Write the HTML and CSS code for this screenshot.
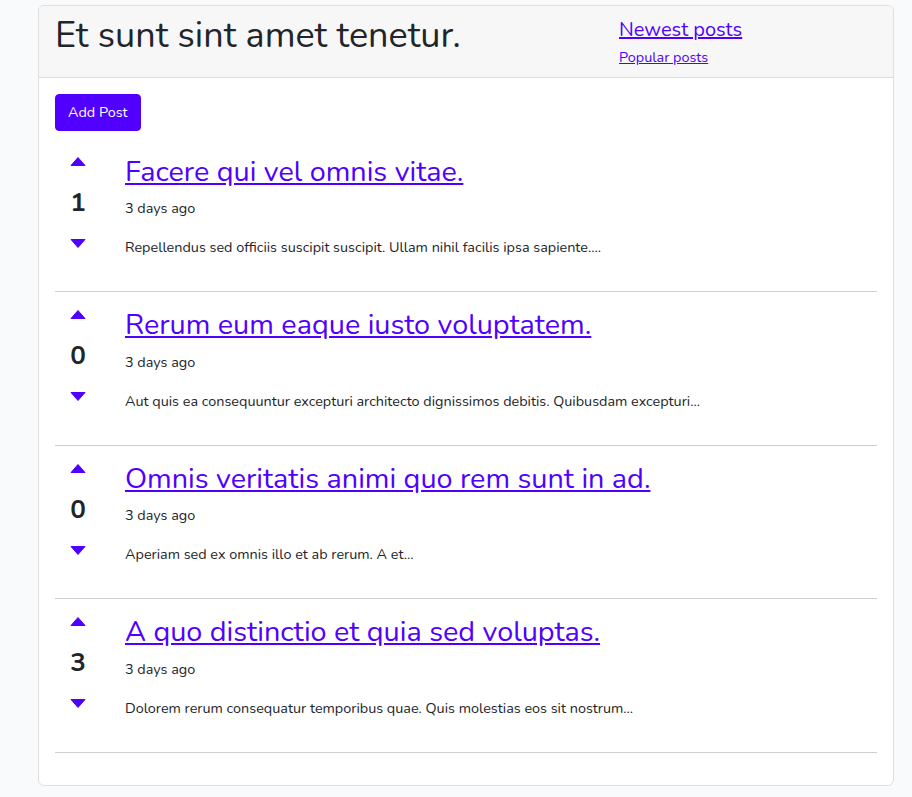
FILE: index.html
```html
<!DOCTYPE html>
<html lang="en">
<head>
<meta charset="utf-8">
<title>Posts</title>
<link rel="stylesheet" href="styles.css">
</head>
<body>
<div class="card">
  <div class="card-header">
    <h1 class="page-title">Et sunt sint amet tenetur.</h1>
    <nav class="sort-links">
      <a href="#" class="sort-main">Newest posts</a>
      <a href="#" class="sort-sub">Popular posts</a>
    </nav>
  </div>
  <div class="card-body">
    <div class="actions"><a href="#" class="btn">Add Post</a></div>
    <div class="post-list">
      <div class="post">
        <div class="vote">
          <svg class="arrow" viewBox="0 0 16 16"><path d="M1 11.5 L8 3.5 L15 11.5 Z" /></svg>
          <div class="count">1</div>
          <svg class="arrow" viewBox="0 0 16 16"><path d="M1 4.5 L8 12.5 L15 4.5 Z" /></svg>
        </div>
        <div class="post-main">
          <h2 class="post-title"><a href="#">Facere qui vel omnis vitae.</a></h2>
          <p class="post-date">3 days ago</p>
          <p class="post-body">Repellendus sed officiis suscipit suscipit. Ullam nihil facilis ipsa sapiente....</p>
        </div>
      </div>
      <div class="post">
        <div class="vote">
          <svg class="arrow" viewBox="0 0 16 16"><path d="M1 11.5 L8 3.5 L15 11.5 Z" /></svg>
          <div class="count">0</div>
          <svg class="arrow" viewBox="0 0 16 16"><path d="M1 4.5 L8 12.5 L15 4.5 Z" /></svg>
        </div>
        <div class="post-main">
          <h2 class="post-title"><a href="#">Rerum eum eaque iusto voluptatem.</a></h2>
          <p class="post-date">3 days ago</p>
          <p class="post-body">Aut quis ea consequuntur excepturi architecto dignissimos debitis. Quibusdam excepturi...</p>
        </div>
      </div>
      <div class="post">
        <div class="vote">
          <svg class="arrow" viewBox="0 0 16 16"><path d="M1 11.5 L8 3.5 L15 11.5 Z" /></svg>
          <div class="count">0</div>
          <svg class="arrow" viewBox="0 0 16 16"><path d="M1 4.5 L8 12.5 L15 4.5 Z" /></svg>
        </div>
        <div class="post-main">
          <h2 class="post-title"><a href="#">Omnis veritatis animi quo rem sunt in ad.</a></h2>
          <p class="post-date">3 days ago</p>
          <p class="post-body">Aperiam sed ex omnis illo et ab rerum. A et...</p>
        </div>
      </div>
      <div class="post">
        <div class="vote">
          <svg class="arrow" viewBox="0 0 16 16"><path d="M1 11.5 L8 3.5 L15 11.5 Z" /></svg>
          <div class="count">3</div>
          <svg class="arrow" viewBox="0 0 16 16"><path d="M1 4.5 L8 12.5 L15 4.5 Z" /></svg>
        </div>
        <div class="post-main">
          <h2 class="post-title"><a href="#">A quo distinctio et quia sed voluptas.</a></h2>
          <p class="post-date">3 days ago</p>
          <p class="post-body">Dolorem rerum consequatur temporibus quae. Quis molestias eos sit nostrum...</p>
        </div>
      </div>
    </div>
  </div>
</div>
</body>
</html>
```

FILE: styles.css
```css
* { box-sizing: border-box; }

html, body { height: 100%; }

body {
  margin: 0;
  padding: 5px 18px 0 38px;
  background: #f8fafc;
  color: #212529;
  font-family: "Nunito", "Lato", "Noto Sans", sans-serif;
  font-size: 14.4px;
  line-height: 1.6;
}

a { color: #5100ff; }

.card {
  background: #fff;
  border: 1px solid #dfdfdf;
  border-radius: 6px;
  overflow: hidden;
}

.card-header {
  display: flex;
  background: #f7f7f7;
  border-bottom: 1px solid #dcdcdc;
  padding: 8px 16px;
}

.page-title {
  flex: 0 0 564px;
  margin: 0 0 8px;
  font-size: 36px;
  font-weight: 400;
  line-height: 43px;
}

.sort-links {
  display: flex;
  flex-direction: column;
  align-items: flex-start;
  gap: 4px;
  padding-top: 4px;
}

.sort-main {
  font-size: 20px;
  line-height: 24px;
}

.sort-sub {
  font-size: 14.4px;
  line-height: 23px;
}

.card-body {
  padding: 16px;
}

.actions {
  margin-bottom: 7.5px;
}

.btn {
  display: inline-block;
  background: #5100ff;
  color: #fff;
  border: 1px solid #5100ff;
  border-radius: 4px;
  padding: 6px 12px;
  font-size: 14.4px;
  line-height: 23px;
  text-decoration: none;
}

.post-list {
  margin-bottom: 16px;
}

.post {
  display: flex;
  border-bottom: 1px solid #cfcfcf;
  padding: 16px 0 32px;
}

.vote {
  flex: 0 0 46px;
  display: flex;
  flex-direction: column;
  align-items: center;
  margin: -1px 24px 0 0;
}

.arrow {
  width: 16px;
  height: 16px;
  fill: #5100ff;
  stroke: #5100ff;
  stroke-width: 1;
  stroke-linejoin: round;
}

.count {
  margin: 21px 0 20px;
  font-size: 26px;
  font-weight: 700;
  line-height: 24px;
}

.post-main {
  flex: 1;
  min-width: 0;
}

.post-title {
  margin: 0 0 8px;
  font-size: 28.8px;
  font-weight: 400;
  line-height: 34.5px;
}

.post-date {
  margin: 0 0 16px;
}

.post-body {
  margin: 0;
}
```
